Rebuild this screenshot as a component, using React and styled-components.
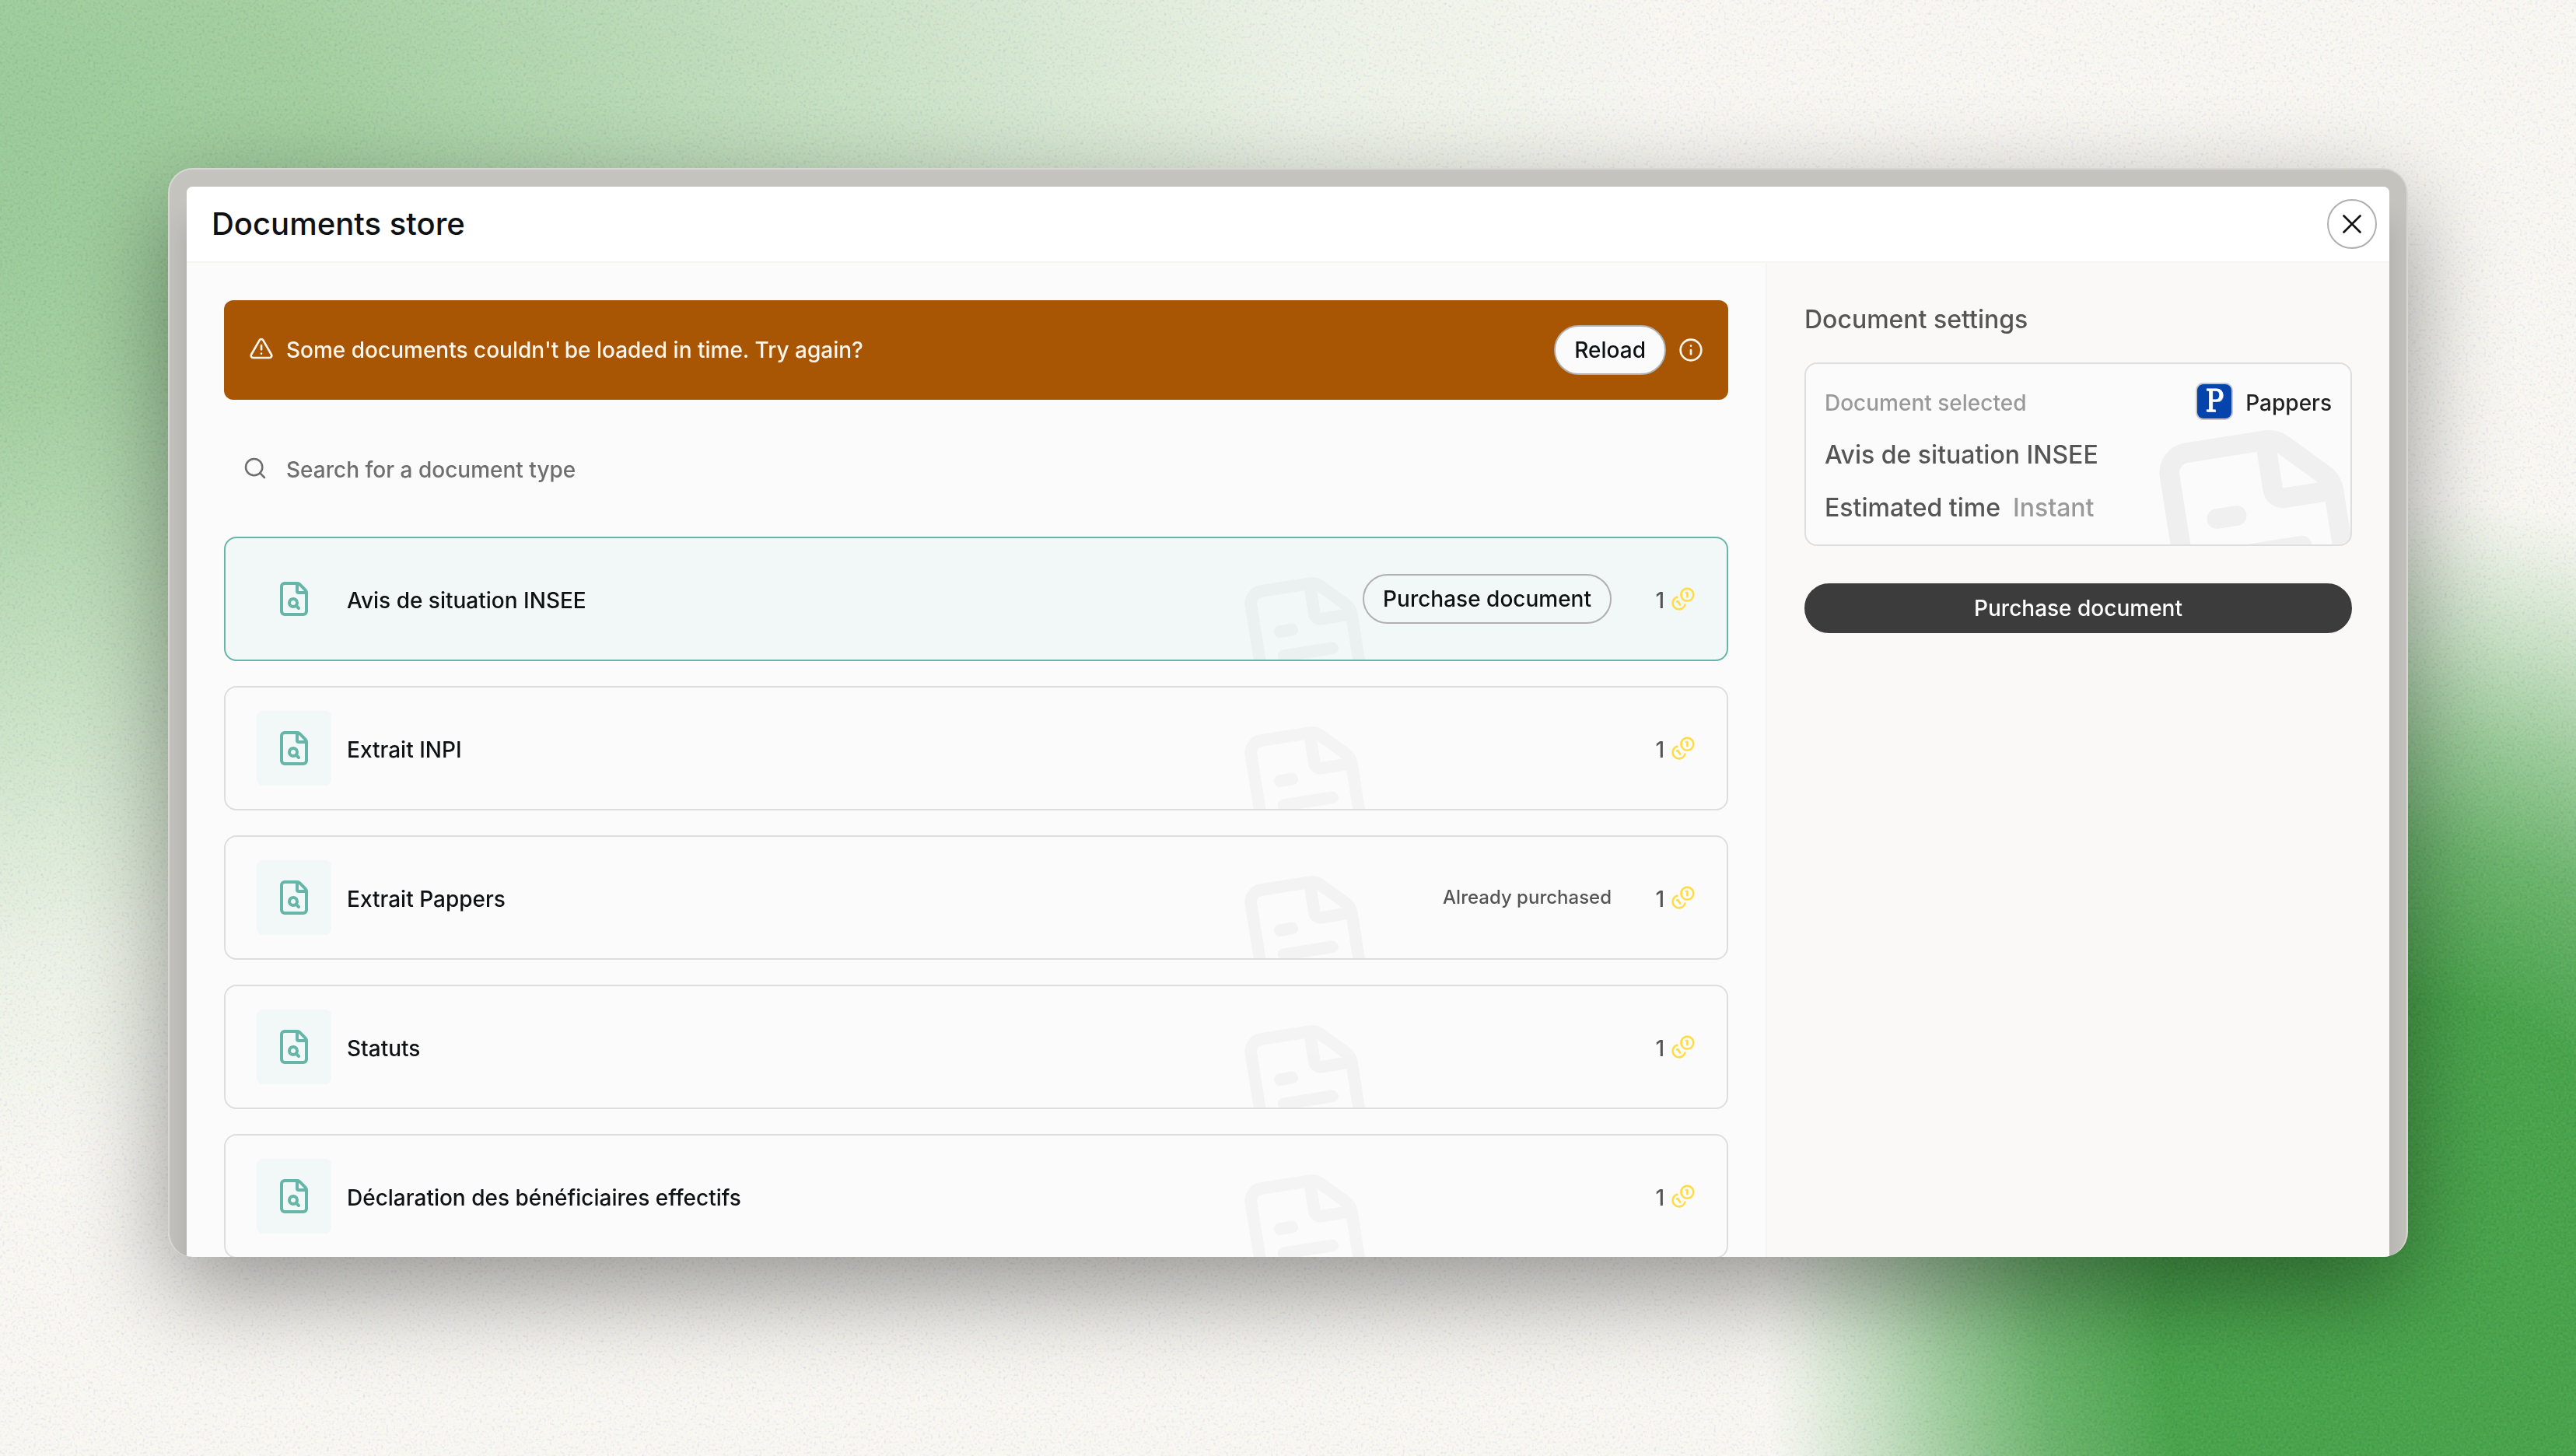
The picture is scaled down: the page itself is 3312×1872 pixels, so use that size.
import React from 'react'
import styled, { createGlobalStyle } from 'styled-components'
import { Info, Search, TriangleAlert, X } from 'lucide-react'

const GlobalStyle = createGlobalStyle`
  * {
    box-sizing: border-box;
  }

  body {
    margin: 0;
    font-family: Inter, "Liberation Sans", sans-serif;
    font-weight: 500;
    font-size: 28px;
    line-height: 40px;
    color: #101114;
  }
`

const Backdrop = styled.div`
  position: relative;
  width: 3312px;
  height: 1872px;
  padding: 216px;
  overflow: hidden;
  background:
    radial-gradient(ellipse 850px 1080px at 3120px 1720px, #48a34b 0%, #48a34b 40%, rgba(72, 163, 75, 0.8) 58%, rgba(72, 163, 75, 0.55) 71%, rgba(72, 163, 75, 0.27) 84%, rgba(72, 163, 75, 0.07) 95%, rgba(72, 163, 75, 0) 100%),
    radial-gradient(ellipse 2300px 1300px at -150px 200px, #98c997 0%, #a3cfa0 25%, rgba(176, 214, 173, 0.75) 50%, rgba(200, 226, 196, 0.25) 80%, rgba(200, 226, 196, 0) 100%),
    #f8f7f2;
`

const Grain = styled.svg`
  position: absolute;
  top: 0;
  left: 0;
  width: 100%;
  height: 100%;
  opacity: 0.14;
  mix-blend-mode: hard-light;
`

const Frame = styled.div`
  position: relative;
  width: 2880px;
  height: 1400px;
  border-radius: 32px;
  box-shadow: 0 44px 124px rgba(0, 0, 0, 0.4);
`

const Bezel = styled.div`
  height: 100%;
  padding: 22px 22px 0;
  overflow: hidden;
  border: 2px solid #d7d6d2;
  border-bottom: 0;
  border-radius: 32px;
  background: #c5c3be;
`

const Modal = styled.div`
  display: flex;
  flex-direction: column;
  height: 1376px;
  border-radius: 8px 8px 0 0;
  overflow: hidden;
  background: #fbfbfb;
  box-shadow: 0 44px 36px rgba(0, 0, 0, 0.14);
`

const Header = styled.div`
  display: flex;
  flex: none;
  align-items: center;
  justify-content: space-between;
  height: 98px;
  padding: 0 16px 0 32px;
  border-bottom: 2px solid #f4f4f0;
  background: #fff;
`

const Title = styled.h1`
  margin: 0;
  font-weight: 500;
  font-size: 40px;
  line-height: 56px;
`

const CloseButton = styled.button`
  display: flex;
  align-items: center;
  justify-content: center;
  width: 64px;
  height: 64px;
  padding: 0;
  border: 2px solid #b0b0b0;
  border-radius: 50%;
  background: #fff;
  color: #101114;
`

const Body = styled.div`
  display: grid;
  grid-template-columns: 1fr 802px;
  flex: 1;
  min-height: 0;
`

const Main = styled.div`
  padding: 48px 48px 0;
`

const Banner = styled.div`
  display: flex;
  align-items: center;
  gap: 16px;
  height: 128px;
  padding: 0 32px;
  border-radius: 12px;
  background: #a85504;
  color: #fff5eb;
`

const WarningIcon = styled(TriangleAlert)`
  margin-bottom: 4px;
`

const BannerText = styled.span`
  flex: 1;
`

const PillButton = styled.button`
  height: 64px;
  width: ${props => props.$block ? '100%' : 'auto'};
  padding: 0 24px;
  border: 2px solid ${props => props.$dark ? '#3c3c3c' : '#b0b0b0'};
  border-radius: 32px;
  background: ${props => props.$dark ? '#3c3c3c' : props.$filled ? '#fbfbfb' : 'transparent'};
  color: ${props => props.$dark ? '#fff' : '#101114'};
  font: inherit;
  white-space: nowrap;
`

const SearchField = styled.div`
  display: flex;
  align-items: center;
  gap: 24px;
  height: 80px;
  margin: 48px 0;
  padding: 0 24px;
  color: #6e6e6e;

  span {
    padding-top: 4px;
  }
`

const DocumentList = styled.div`
  display: flex;
  flex-direction: column;
  gap: 32px;
`

const DocumentRow = styled.div`
  position: relative;
  display: flex;
  align-items: center;
  height: 160px;
  padding: 0 40px;
  overflow: hidden;
  border: 2px solid ${props => props.$selected ? '#66b5a9' : '#dedede'};
  border-radius: 16px;
  background: ${props => props.$selected ? '#f2f7f7' : '#fbfbfb'};
`

const IconTile = styled.div`
  display: flex;
  align-items: center;
  justify-content: center;
  width: 96px;
  height: 96px;
  margin-right: 20px;
  border-radius: 8px;
  background: #f2f7f7;
  color: #66b5a9;
`

const DocumentName = styled.span`
  flex: 1;
  padding-top: 3px;
`

const Purchased = styled.span`
  font-size: 24px;
  color: #555;
`

const Price = styled.div`
  display: flex;
  align-items: center;
  justify-content: flex-end;
  gap: 8px;
  width: 108px;
  color: #555;

  span {
    padding-top: 3px;
  }

  svg {
    color: #ffdd4a;
  }
`

const RowWatermark = styled.div`
  position: absolute;
  left: 1296px;
  top: 44px;
  width: 189px;
  height: 189px;
  transform: rotate(-9deg);
  opacity: 0.026;
`

const Sidebar = styled.div`
  padding: 48px;
  border-left: 2px solid #f4f4f0;
  background: #faf9f7;
`

const SidebarTitle = styled.h2`
  margin: 0;
  padding-top: 1px;
  font-weight: 500;
  font-size: 32px;
  line-height: 48px;
  color: #555;
`

const SettingsCard = styled.div`
  position: relative;
  display: flex;
  flex-direction: column;
  gap: 20px;
  height: 236px;
  margin: 31px 0 48px;
  padding: 24px;
  overflow: hidden;
  border: 2px solid #dedede;
  border-radius: 16px;
  background: #fbfbfb;
`

const CardRow = styled.div`
  display: flex;
  flex: none;
  align-items: center;
  gap: 16px;
  height: 48px;
  font-size: ${props => props.$small ? 28 : 32}px;
  color: #555;

  span {
    padding-top: ${props => props.$small ? 4 : 2}px;
  }
`

const Muted = styled.span`
  color: #999;
`

const Provider = styled.div`
  display: flex;
  align-items: center;
  gap: 16px;
  margin-left: auto;
  color: #222;
`

const ProviderLogo = styled.div`
  width: 48px;
  height: 48px;
  border: 2px solid #c6c6c6;
  border-radius: 10px;
  background: #0444ac;
  color: #fff;
  font-family: "DejaVu Serif Condensed", "DejaVu Serif", serif;
  font-weight: 400;
  font-size: 39px;
  line-height: 44px;
  text-align: center;
  -webkit-text-stroke: 1px #fff;
  text-shadow: 1px 1px 0 #8fa9dc;
`

const CardWatermark = styled.div`
  position: absolute;
  right: -39px;
  top: 75px;
  width: 308px;
  height: 308px;
  transform: rotate(-9deg);
  opacity: 0.045;
`

const FileSearchIcon = () => (
  <svg width="48" height="48" viewBox="0 0 24 24" fill="none" stroke="currentColor" strokeWidth="2" strokeLinecap="round" strokeLinejoin="round">
    <path d="M6 22a2 2 0 0 1-2-2V4a2 2 0 0 1 2-2h8a2.4 2.4 0 0 1 1.704.706l3.588 3.588A2.4 2.4 0 0 1 20 8v12a2 2 0 0 1-2 2z" />
    <path d="M14 2v5a1 1 0 0 0 1 1h5" />
    <circle cx="11.5" cy="14.5" r="2.5" />
    <path d="M13.3 16.3 15 18" />
  </svg>
)

const CoinsIcon = () => (
  <svg width="32" height="32" viewBox="0 0 24 24" fill="none" stroke="currentColor" strokeWidth="2" strokeLinecap="round" strokeLinejoin="round">
    <path d="M13.744 17.736a6 6 0 1 1-7.48-7.48" />
    <path d="M15 6h1v4" />
    <path d="m6.134 14.768.866-.5 2 3.464" />
    <circle cx="16" cy="8" r="6" />
  </svg>
)

const FileTextIcon = () => (
  <svg width="100%" height="100%" viewBox="0 0 24 24" fill="none" stroke="#000" strokeWidth="2" strokeLinecap="round" strokeLinejoin="round">
    <path d="M6 22a2 2 0 0 1-2-2V4a2 2 0 0 1 2-2h8a2.4 2.4 0 0 1 1.704.706l3.588 3.588A2.4 2.4 0 0 1 20 8v12a2 2 0 0 1-2 2z" />
    <path d="M14 2v5a1 1 0 0 0 1 1h5" />
    <path d="M10 9H8" />
    <path d="M16 13H8" />
    <path d="M16 17H8" />
  </svg>
)

const documents = [
  { name: 'Avis de situation INSEE', selected: true },
  { name: 'Extrait INPI' },
  { name: 'Extrait Pappers', purchased: true },
  { name: 'Statuts' },
  { name: 'Déclaration des bénéficiaires effectifs' },
]

const App = () => (
  <Backdrop>
    <GlobalStyle />
    <Grain>
      <filter id="grain" x="0" y="0" width="100%" height="100%" colorInterpolationFilters="sRGB">
        <feTurbulence type="fractalNoise" baseFrequency="0.3" numOctaves="2" seed="4" />
        <feColorMatrix values="0.7 0.3 0 0 0  0.3 0.7 0 0 0  0.3 0.2 0.5 0 0  0 0 0 0 1" />
      </filter>
      <rect width="100%" height="100%" filter="url(#grain)" />
    </Grain>
    <Frame>
      <Bezel>
        <Modal>
          <Header>
            <Title>Documents store</Title>
            <CloseButton><X size={42} strokeWidth={1.5} /></CloseButton>
          </Header>
          <Body>
            <Main>
              <Banner>
                <WarningIcon size={32} />
                <BannerText>Some documents couldn't be loaded in time. Try again?</BannerText>
                <PillButton $filled>Reload</PillButton>
                <Info size={32} />
              </Banner>
              <SearchField>
                <Search size={32} strokeWidth={1.9} />
                <span>Search for a document type</span>
              </SearchField>
              <DocumentList>
                {documents.map(doc => (
                  <DocumentRow key={doc.name} $selected={doc.selected}>
                    <RowWatermark><FileTextIcon /></RowWatermark>
                    <IconTile><FileSearchIcon /></IconTile>
                    <DocumentName>{doc.name}</DocumentName>
                    {doc.selected && <PillButton>Purchase document</PillButton>}
                    {doc.purchased && <Purchased>Already purchased</Purchased>}
                    <Price>
                      <span>1</span>
                      <CoinsIcon />
                    </Price>
                  </DocumentRow>
                ))}
              </DocumentList>
            </Main>
            <Sidebar>
              <SidebarTitle>Document settings</SidebarTitle>
              <SettingsCard>
                <CardWatermark><FileTextIcon /></CardWatermark>
                <CardRow $small>
                  <Muted>Document selected</Muted>
                  <Provider>
                    <ProviderLogo>P</ProviderLogo>
                    <span>Pappers</span>
                  </Provider>
                </CardRow>
                <CardRow>
                  <span>Avis de situation INSEE</span>
                </CardRow>
                <CardRow>
                  <span>Estimated time</span>
                  <Muted>Instant</Muted>
                </CardRow>
              </SettingsCard>
              <PillButton $dark $block>Purchase document</PillButton>
            </Sidebar>
          </Body>
        </Modal>
      </Bezel>
    </Frame>
  </Backdrop>
)

export default App
